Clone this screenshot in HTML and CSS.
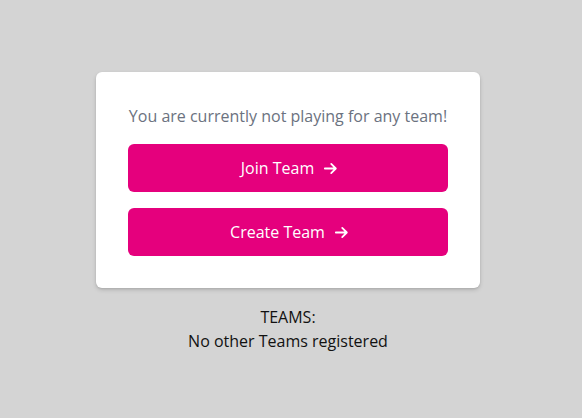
FILE: index.html
```html
<!DOCTYPE html>
<html lang="en">
<head>
<meta charset="utf-8">
<link rel="stylesheet" href="styles.css">
</head>
<body>
<main class="page">
  <section class="card">
    <p class="notice">You are currently not playing for any team!</p>
    <button class="btn">Join Team
      <svg class="arrow" viewBox="0 0 24 24" fill="none" stroke="currentColor" stroke-width="2.5" stroke-linecap="round" stroke-linejoin="round"><path d="M4 12h15M13 5.5l6.5 6.5-6.5 6.5"/></svg>
    </button>
    <button class="btn">Create Team
      <svg class="arrow" viewBox="0 0 24 24" fill="none" stroke="currentColor" stroke-width="2.5" stroke-linecap="round" stroke-linejoin="round"><path d="M4 12h15M13 5.5l6.5 6.5-6.5 6.5"/></svg>
    </button>
  </section>
  <div class="teams">
    <div>TEAMS:</div>
    <div>No other Teams registered</div>
  </div>
</main>
</body>
</html>
```
FILE: styles.css
```css
html, body {
  margin: 0;
  padding: 0;
  background: #d4d4d4;
  font-family: "Open Sans", "Noto Sans", sans-serif;
  font-size: 16px;
  line-height: 24px;
}
.page {
  display: flex;
  flex-direction: column;
  align-items: center;
  padding: 72px 6px 0 0;
}
.card {
  width: 384px;
  box-sizing: border-box;
  background: #fff;
  border-radius: 6px;
  box-shadow: 0 2px 4px rgba(0,0,0,0.15), 0 1px 2px rgba(0,0,0,0.08);
  padding: 32px 32px 32px;
  display: flex;
  flex-direction: column;
  gap: 16px;
}
.notice {
  margin: 0;
  text-align: center;
  color: #6b7280;
}
.btn {
  height: 48px;
  border: none;
  border-radius: 6px;
  background: #e5007d;
  color: #fff;
  font-family: inherit;
  font-size: 16px;
  display: flex;
  align-items: center;
  justify-content: center;
  gap: 8px;
  padding: 0 0 0 4px;
}
.arrow {
  width: 17px;
  height: 17px;
}
.teams {
  margin-top: 17px;
  text-align: center;
  color: #111;
}
```
